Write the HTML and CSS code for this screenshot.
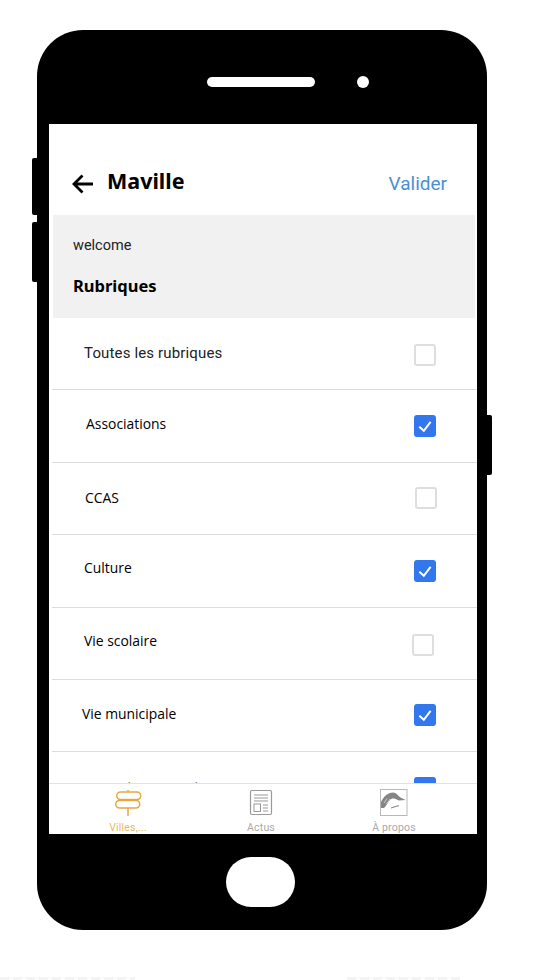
FILE: index.html
```html
<!DOCTYPE html>
<html lang="fr">
<head>
<meta charset="utf-8">
<title>Maville</title>
<link rel="stylesheet" href="styles.css">
</head>
<body>
<div class="phone">
  <span class="side side-a"></span>
  <span class="side side-b"></span>
  <span class="side side-c"></span>
  <div class="phone-top">
    <span class="speaker"></span>
    <span class="camera"></span>
  </div>
  <main class="screen">
    <header class="app-header">
      <svg class="back" width="22" height="20" viewBox="0 0 22 20" aria-hidden="true"><path d="M21 10H2M10.500 1.500 2 10l8.500 8.500" fill="none" stroke="#000" stroke-width="2.800"/></svg>
      <h1 class="app-title">Maville</h1>
      <a class="validate">Valider</a>
    </header>
    <section class="intro">
      <p class="welcome">welcome</p>
      <h2 class="section-title">Rubriques</h2>
    </section>
    <ul class="list">
      <li class="row row-1"><span class="label label-first">Toutes les rubriques</span><span class="box"></span></li>
      <li class="row row-2"><span class="label">Associations</span><span class="box checked"><svg width="22" height="22" viewBox="0 0 22 22"><path d="M5.300 11.800 9.800 15.800 16.600 6.800" fill="none" stroke="#fff" stroke-width="2"/></svg></span></li>
      <li class="row row-3"><span class="label">CCAS</span><span class="box"></span></li>
      <li class="row row-4"><span class="label">Culture</span><span class="box checked"><svg width="22" height="22" viewBox="0 0 22 22"><path d="M5.300 11.800 9.800 15.800 16.600 6.800" fill="none" stroke="#fff" stroke-width="2"/></svg></span></li>
      <li class="row row-5"><span class="label">Vie scolaire</span><span class="box"></span></li>
      <li class="row row-6"><span class="label">Vie municipale</span><span class="box checked"><svg width="22" height="22" viewBox="0 0 22 22"><path d="M5.300 11.800 9.800 15.800 16.600 6.800" fill="none" stroke="#fff" stroke-width="2"/></svg></span></li>
      <li class="row row-7"><span class="label label-faint">Conseil municipal</span><span class="box checked"></span></li>
    </ul>
    <nav class="tabs">
      <a class="tab tab-active">
        <svg width="28" height="27" viewBox="0 0 28 27" aria-hidden="true"><g fill="none" stroke="#e5a93f" stroke-width="1.500"><path d="M14 1v2M14 19v8"/><rect x="2.750" y="3" width="24" height="7.500" rx="3.750"/><rect x="1.750" y="11.500" width="24" height="7.500" rx="3.750"/></g></svg>
        <span class="tab-label">Villes,...</span>
      </a>
      <a class="tab">
        <svg width="28" height="27" viewBox="0 0 28 27" aria-hidden="true"><g fill="none" stroke="#999"><rect x="3.500" y="1.500" width="21" height="24" rx="1.500" stroke-width="1.200"/><path d="M7 6h14M7 9h14M7 12h14"/><rect x="7" y="15" width="6.500" height="7.500"/><path d="M16 16h5M16 19h5M16 22h5"/></g></svg>
        <span class="tab-label">Actus</span>
      </a>
      <a class="tab">
        <svg width="28" height="27" viewBox="0 0 28 27" aria-hidden="true"><rect x=".5" y=".5" width="26.500" height="26" fill="#fff" stroke="#b8b8b8"/><path d="M1 13C4 7 8 3.500 13 3.500c3 0 5 3 7.500 5l5 2.500-6.500 .5-3.500-1.500c-2-.8-4.500-.5-6 1.500-2 2.500-3 5-5.500 7.500H1z" fill="#858585"/><path d="M4 14 7 9.500M6.500 15 10 10" fill="none" stroke="#ddd" stroke-width=".8"/><path d="M11 19c3-.3 5-2.300 8-2.300" fill="none" stroke="#8a8a8a" stroke-width="1.100"/></svg>
        <span class="tab-label">À propos</span>
      </a>
    </nav>
  </main>
  <div class="phone-bottom"><span class="home"></span></div>
</div>
<footer class="page-foot" aria-hidden="true">
  <span class="foot-bar foot-left"></span>
  <span class="foot-bar foot-right"></span>
</footer>
</body>
</html>
```

FILE: styles.css
```css
* { box-sizing: border-box; }
html, body { margin: 0; padding: 0; background: #fff; }
body { height: 980px; overflow: hidden; font-family: "Open Sans", sans-serif; color: #000; }

.phone { position: relative; width: 450px; height: 900px; margin: 30px 0 0 37px; background: #000; border-radius: 46px; }
.side { position: absolute; width: 6px; background: #000; }
.side-a { left: -5px; top: 128px; height: 57px; border-radius: 2px 0 0 2px; }
.side-b { left: -5px; top: 192px; height: 60px; border-radius: 2px 0 0 2px; }
.side-c { right: -5px; top: 385px; height: 60px; border-radius: 0 2px 2px 0; }

.phone-top { height: 94px; display: flex; align-items: flex-start; gap: 42px; padding: 47px 0 0 170px; }
.speaker { width: 108px; height: 10px; border-radius: 5px; background: #fff; }
.camera { width: 12px; height: 12px; margin-top: -1px; border-radius: 50%; background: #fff; }

.screen { width: 428px; height: 710px; margin-left: 12px; background: #fff; display: flex; flex-direction: column; overflow: hidden; }

.app-header { height: 91px; flex: none; display: flex; align-items: center; padding: 26px 30px 0 23px; }
.back { margin-top: 2px; }
.app-title { margin: 0 0 4px 13px; font-size: 21.500px; line-height: 30px; font-weight: 700; font-family: "Noto Sans", sans-serif; }
.validate { margin: 2px 0 0 auto; font-family: Roboto, sans-serif; font-size: 19px; line-height: 26px; color: #4a8fd3; }

.intro { height: 103px; flex: none; margin: 0 2px 0 4px; padding: 21px 0 0 20px; background: #f1f1f1; }
.welcome { margin: 0; font-family: Roboto, sans-serif; font-size: 14.500px; line-height: 20px; color: #222; }
.section-title { margin: 15px 0 0; font-size: 16.500px; line-height: 30px; font-weight: 700; font-family: "Noto Sans", sans-serif; }

.list { flex: 1; min-height: 0; margin: 0; padding: 0 0 0 3px; list-style: none; overflow: hidden; }
.row { height: 72.400px; display: flex; align-items: center; justify-content: space-between; border-bottom: 1px solid #dcdcdc; }
.label { font-size: 13.900px; line-height: 20px; color: #000; }
.label-first { font-family: Roboto, sans-serif; font-size: 15px; letter-spacing: .15px; color: #222; }
.label-faint { color: #777; }
.box { width: 22px; height: 22px; flex: none; border: 2px solid #dedede; border-radius: 3px; background: #fff; }
.box svg { display: block; }
.checked { border: 0; background: #3377ee; }

.row-1 .label { margin: 0 0 2px 32px; }
.row-1 .box { margin: 2px 41px 0 0; }
.row-2 .label { margin: 0 0 4px 34px; }
.row-2 .box { margin: 0 41px 0 0; }
.row-3 .label { margin: 0 0 0 33px; }
.row-3 .box { margin: 0 40px 0 0; }
.row-4 .label { margin: 0 0 6px 32px; }
.row-4 .box { margin: 0 41px 0 0; }
.row-5 .label { margin: 0 0 4px 32px; }
.row-5 .box { margin: 3px 43px 0 0; }
.row-6 .label { margin: 0 0 4px 30px; }
.row-6 .box { margin: -2px 41px 0 0; }
.row-7 { align-items: flex-start; padding-top: 25px; }
.row-7 .label { margin-left: 32px; margin-top: 1px; }
.row-7 .box { margin-right: 41px; }

.tabs { height: 51px; flex: none; display: grid; grid-template-columns: repeat(3, 133px); justify-content: start; padding: 5px 0 0 12.500px; background: #fff; border-top: 1px solid #e2e2e2; }
.tab { display: flex; flex-direction: column; align-items: center; }
.tab svg { display: block; }
.tab-label { margin-top: 6px; font-family: Roboto, sans-serif; font-size: 10.500px; line-height: 12px; letter-spacing: .2px; color: #a9a9a9; }
.tab-active .tab-label { color: #eab765; }

.phone-bottom { height: 96px; padding: 23px 0 0 189px; }
.home { display: block; width: 69px; height: 50px; border-radius: 25px; background: #fff; }

.page-foot { display: flex; align-items: flex-start; padding-top: 47px; }
.foot-bar { height: 3px; background: repeating-linear-gradient(90deg, #f4f4f4 0 9px, #fcfcfc 9px 13px); }
.foot-left { width: 135px; }
.foot-right { width: 113px; margin-left: 212px; }
```
